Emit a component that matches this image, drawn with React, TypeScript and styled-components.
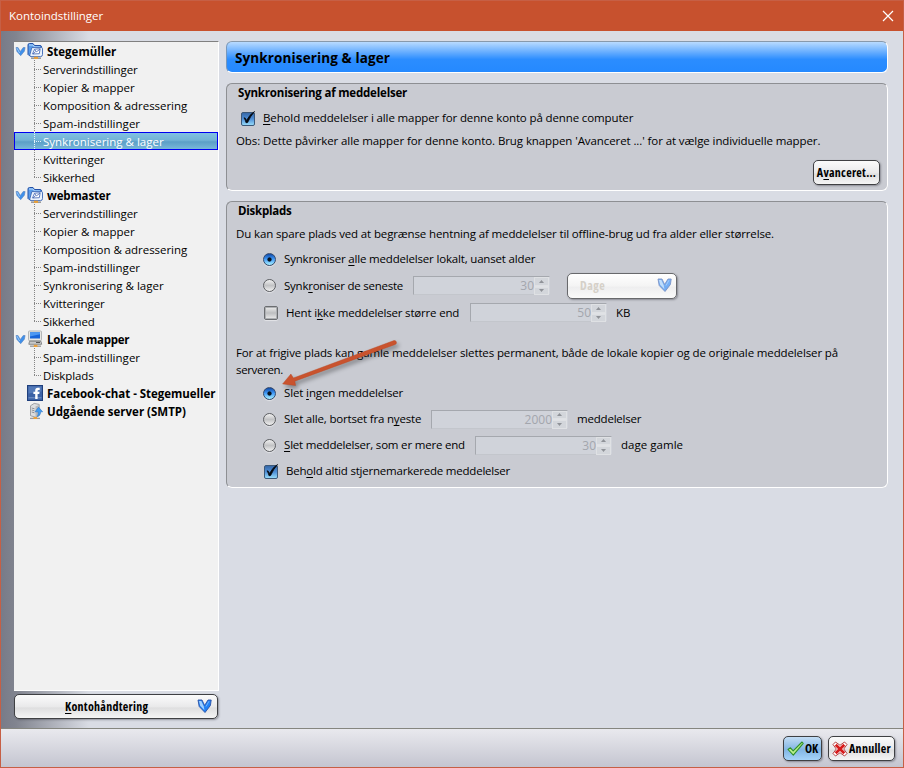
import React from 'react';
import styled, { createGlobalStyle, css } from 'styled-components';

const Global = createGlobalStyle`
  * { box-sizing: border-box; }
  body { margin: 0; }
`;

const Window = styled.div`
  position: relative;
  display: flex;
  flex-direction: column;
  width: 904px;
  height: 768px;
  border: 1px solid #c65f45;
  font: 11.5px/18px 'Open Sans', 'Noto Sans', sans-serif;
  color: #000;
  overflow: hidden;
  white-space: nowrap;
`;
const TitleBar = styled.header`
  flex: none;
  display: flex;
  align-items: center;
  justify-content: space-between;
  height: 30px;
  padding: 0 9px 0 8px;
  background: #c7512e;
  color: #fff;
`;
const Body = styled.main`
  flex: none;
  display: flex;
  gap: 7px;
  height: 697px;
  padding: 10px 0 0 13px;
  background: linear-gradient(90deg, #787b88 0, #81848f 15px, #d9dce4 88px);
`;
const Footer = styled.footer`
  flex: 1;
  display: flex;
  align-items: flex-start;
  justify-content: flex-end;
  gap: 6px;
  padding: 7px 8px 0 0;
  border-top: 1px solid #85867f;
  background: linear-gradient(#e9e9ee, #c4c5d0);
`;
const Side = styled.div`
  display: flex;
  flex-direction: column;
  gap: 3px;
  width: 205px;
`;
const Tree = styled.ul`
  list-style: none;
  margin: 0;
  padding: 0;
  height: 650px;
  line-height: 20px;
  background: #f1f1f1;
  border-top: 1px solid #808080;
  border-right: 1px solid #fff;
  border-bottom: 1px solid #fff;
`;
const Text = styled.span<{ $ls?: number }>`
  letter-spacing: ${(p) => p.$ls ?? 0}px;
  u { text-underline-offset: 2px; text-decoration-thickness: 1px; text-decoration-skip-ink: none; }
`;
const AccountName = styled(Text)`
  align-self: flex-start;
`;
const AccountRow = styled.li`
  display: flex;
  align-items: center;
  height: 18px;
  padding-left: 1px;
  font-weight: 700;
`;
const Twisty = styled.span`
  flex: none;
  display: flex;
  width: 12px;
`;
const AccountIcon = styled.span`
  flex: none;
  display: flex;
  width: 20px;
`;
const PageRow = styled.li<{ $selected?: boolean }>`
  display: flex;
  height: 18px;
  padding-left: 20px;
  ${(p) =>
    p.$selected &&
    css`
      color: #fff;
      background: linear-gradient(#83c3e3, #73b3d6 45%, #5b9fc7 55%, #7dbbdc);
      box-shadow: inset 0 0 0 1px #0000f0;
    `}
`;
const Branch = styled.span<{ $last?: boolean; $light?: boolean }>`
  --dot: ${(p) => (p.$light ? '#e4f2fa' : '#858585')};
  width: 9px;
  height: 18px;
  background:
    repeating-linear-gradient(180deg, var(--dot) 0 1px, transparent 1px 2px) 0 0 / 1px ${(p) => (p.$last ? '10px' : '18px')} no-repeat,
    repeating-linear-gradient(90deg, var(--dot) 0 1px, transparent 1px 2px) 0 9px / 7px 1px no-repeat;
`;

const Button = styled.button<{ $w: number; $primary?: boolean; $muted?: boolean }>`
  flex: none;
  display: flex;
  align-items: center;
  justify-content: center;
  gap: 1px;
  width: ${(p) => p.$w}px;
  height: ${(p) => (p.$muted ? 26 : 25)}px;
  padding: 0 1px;
  font: 700 12px/18px 'Open Sans', 'Noto Sans', sans-serif;
  font-stretch: 87.5%;
  color: #000;
  border: 1.5px solid ${(p) => (p.$muted ? '#68696c' : '#3f4043')};
  border-radius: 5px;
  box-shadow: 1px 1px 2px rgba(60, 60, 70, 0.45);
  background: ${(p) =>
    p.$primary ? 'linear-gradient(#c3ddf5, #82b5e3 55%, #a6d4fa)' : 'linear-gradient(#fbfbfb, #e9e9ea 52%, #dededf 56%, #f5f5f5)'};
  ${(p) =>
    p.$muted &&
    css`
      justify-content: space-between;
      padding: 0 4px 0 12px;
      color: #d5d0c8;
      background: linear-gradient(#fff, #f4f4f4 50%, #eeeeef 55%, #fafafa);
    `}
`;
const MenuButton = styled(Button)`
  justify-content: space-between;
  padding: 0 5px 0 50px;
`;

const Content = styled.section`
  width: 662px;
`;
const Heading = styled.h1`
  display: flex;
  align-items: center;
  height: 32px;
  margin: 0 0 10px;
  padding: 2px 0 0 8px;
  font-size: 13.5px;
  border: 1px solid;
  border-color: #8899ab #fff #fff #7797bb;
  border-radius: 6px;
  background: linear-gradient(#b9dbff, #2b8dff 58%, #2589ff);
`;
const Group = styled.fieldset<{ $h: number }>`
  display: block;
  height: ${(p) => p.$h}px;
  min-width: 0;
  margin: 0 0 10px;
  padding: 0 7px 0 9px;
  border: 1px solid;
  border-color: #8d8f93 #fff #fff #8d8f93;
  border-radius: 6px;
  background: #c9cbd2;
`;
const GroupTitle = styled.h2`
  margin: 0 0 0 2px;
  height: 19px;
  font-size: 11.5px;
  line-height: 18px;
`;
const Line = styled.div<{ $h?: number; $indent?: number; $end?: boolean }>`
  display: flex;
  align-items: center;
  height: ${(p) => p.$h ?? 26}px;
  padding-left: ${(p) => p.$indent ?? 0}px;
  justify-content: ${(p) => (p.$end ? 'flex-end' : 'flex-start')};
`;
const Paragraph = styled.p<{ $top: number; $bottom: number }>`
  margin: ${(p) => p.$top}px 0 ${(p) => p.$bottom}px;
  line-height: 17px;
`;
const Label = styled.label<{ $w?: number; $ml: number }>`
  flex: none;
  margin-left: ${(p) => p.$ml}px;
  width: ${(p) => (p.$w ? p.$w + 'px' : 'auto')};
`;
const RadioDot = styled.span<{ $on?: boolean }>`
  flex: none;
  width: 13px;
  height: 13px;
  border-radius: 50%;
  border: 1px solid ${(p) => (p.$on ? '#33486a' : '#5c5e62')};
  box-shadow: 0 1px 1px rgba(255, 255, 255, 0.5);
  background: ${(p) =>
    p.$on
      ? 'radial-gradient(circle at 50% 50%, #07131f 0 1.7px, transparent 2.5px), linear-gradient(#0f4aa8 0, #3f97f5 45%, #a9f0ff 100%)'
      : 'linear-gradient(#f0f0f0, #c2c3c5 50%, #f0f0f0)'};
`;
const Field = styled.span`
  flex: none;
  display: flex;
  justify-content: flex-end;
  width: 137px;
  height: 19px;
  border: 1px solid;
  border-color: #a5a8ae transparent #c3c6cc #a5a8ae;
  background: #d0d3da;
  color: #a3a6ad;
  font-size: 12px;
  line-height: 18px;
`;
const Stepper = styled.span`
  display: flex;
  flex-direction: column;
  gap: 1px;
  width: 15px;
  height: 18px;
  background: #e0e2e6;
`;
const Step = styled.span`
  flex: 1;
  display: flex;
  align-items: center;
  justify-content: center;
  border: 1px solid #dfe1e4;
  background: #d3d6db;
`;

const Chevron = ({ faded = false }: { faded?: boolean }) => (
  <svg width="15" height="15" viewBox="0 0 15 15" opacity={faded ? 0.6 : 1}>
    <path d="M1 1h4l2.6 5.5L11 1h3.2l-.8 5.5L8 13.5 2.2 7.5z" fill="#1f80f5" stroke="#2b50a4" strokeWidth=".9" />
    <path d="M2 2h2.3l2.5 5.6.6 3.6L3.2 6.800z" fill="#9fcfff" />
    <path d="M9 7.500 12 2.200" stroke="#6fb2ff" strokeWidth="1" />
  </svg>
);
const TreeChevron = () => (
  <svg width="11" height="11" viewBox="0 0 11 11">
    <path d="M1 1.5h2l2.3 4 2.9-4h1.9l-.7 3.7-3.7 4.5L1.9 5.4z" fill="#3f90ea" stroke="#5b83bd" strokeWidth=".6" />
    <path d="M2 2.2 4.600 7" stroke="#a9d2fa" strokeWidth=".9" />
  </svg>
);
const MailAccountIcon = () => (
  <svg width="17" height="18" viewBox="0 0 17 18">
    <path d="M1 12.5V3q0-1.5 1.5-1.5H6l1.5 2h5.5q1.5 0 1.5 1.5v8.5H2z" fill="#579be9" stroke="#2450a6" />
    <path d="M2 3h4l1.5 2H13" stroke="#b8dcff" fill="none" />
    <path d="M4.8 5.6h9.7q1 0 1 1v6q0 2-2 2H4q-1.5 0-1.2-1.7z" fill="#e9f2fd" stroke="#3a66b4" strokeWidth=".9" />
    <path d="m5.5 12 2-4.7 5.7-.6-.9 5z" fill="#fff" stroke="#5273ba" strokeWidth=".9" />
    <path d="m7.5 7.5 2 2.3 3.5-2.6M6 12l2.7-2.5" stroke="#3d62b0" fill="none" strokeWidth=".8" />
    <path d="M4 16.2h10" stroke="#9b9b9b" strokeWidth="1.6" />
    <path d="M7 15.8h4" stroke="#eaa03a" strokeWidth="2.2" />
  </svg>
);
const ComputerIcon = () => (
  <svg width="17" height="18" viewBox="0 0 17 18">
    <rect x="1.5" y="1" width="13" height="9.5" rx=".8" fill="#e6e6e3" stroke="#a5a7a8" strokeWidth=".8" />
    <rect x="3" y="2.3" width="10" height="6.2" fill="#1764d8" />
    <path d="M3 2.3h10v2L3 6.6z" fill="#4c98f3" />
    <path d="M2.5 11.3h11.5l.7 3H1.8z" fill="#c8c9c9" stroke="#75777a" strokeWidth=".8" />
    <path d="M9 12.5h4" stroke="#555" />
    <path d="M3 16.2h11" stroke="#9b9b9b" strokeWidth="1.4" />
    <path d="M6.8 15.9h3.6" stroke="#eaa03a" strokeWidth="2.2" />
  </svg>
);
const FacebookIcon = () => (
  <svg width="16" height="16" viewBox="0 0 16 16">
    <rect x=".5" y=".5" width="15" height="15" fill="#3c62a5" stroke="#1f3f7c" />
    <path d="M1.5 1.5h13v5l-13 2z" fill="#5379b8" />
    <path d="M1.5 12.8h13" stroke="#7a99cb" />
    <path d="M8.2 14V9H6.4V6.8h1.8V5.4q0-2.7 2.7-2.7h1.8V5h-1.2q-.9 0-.9.9v.9h2L12.3 9h-1.7v5z" fill="#fff" />
  </svg>
);
const ServerIcon = () => (
  <svg width="17" height="18" viewBox="0 0 17 18">
    <path d="m3.5 3.8 3.7-2.4 5 1v11.2l-3.9 1.6-4.8-1.5z" fill="#dddedf" stroke="#8c8f94" strokeWidth=".8" />
    <path d="M8.5 4.6v10.2l3.5-1.3V3z" fill="#b5b8bd" />
    <path d="m4.7 6 2.8.8M4.7 8l2.8.8M4.7 10l2.8.8" stroke="#84878c" strokeWidth=".9" />
    <path d="M3 16.4h10" stroke="#9b9b9b" strokeWidth="1.3" />
    <path d="M6.5 16h3.6" stroke="#eaa03a" strokeWidth="2" />
    <path d="m11.6 5.2 4 4.6h-2.1c.2 2.3-.7 4-3.3 4.7 1-1.5 1.2-2.8 1-4.7H8.1z" fill="#3f9cf3" stroke="#2a73c8" strokeWidth=".6" />
  </svg>
);
const CheckedBox = () => (
  <svg width="16" height="17" viewBox="0 0 16 17">
    <defs>
      <linearGradient id="boxFill" x2="0" y2="1">
        <stop stopColor="#3565a4" />
        <stop offset=".5" stopColor="#4e8fd8" />
        <stop offset="1" stopColor="#9be0fb" />
      </linearGradient>
    </defs>
    <rect x="1.5" y="2.5" width="13" height="13" rx="1.5" fill="url(#boxFill)" stroke="#3c5878" />
    <path d="M4 7.8q1.5-.3 2.6 2.7Q9.5 4.5 14.500 1.500 10.500 6 7.600 12.500L6 12.700Q5.400 9.700 4 7.800z" fill="#050a12" stroke="#050a12" strokeWidth=".8" />
  </svg>
);
const EmptyBox = styled.span`
  flex: none;
  width: 14px;
  height: 14px;
  margin: 0 1px;
  border: 1px solid #6b6d70;
  border-radius: 2px;
  box-shadow: inset 0 0 0 1px #aeb0b3, 0 1px 1px rgba(255, 255, 255, 0.5);
  background: linear-gradient(#ededed, #bdbec0 50%, #ececec);
`;
const OkIcon = () => (
  <svg width="17" height="17" viewBox="0 0 17 17">
    <path d="m1 9.5 2.4-1.7 2.8 3L15 2l1.2 1.3L6.3 15.2z" fill="#b9f08b" stroke="#2d8f2a" strokeWidth="1.1" strokeLinejoin="round" />
  </svg>
);
const CancelIcon = () => (
  <svg width="16" height="16" viewBox="0 0 16 16">
    <path d="M3.5 1 8 4.300 12.500 1 15 3.500 11.700 8 15 12.500 12.500 15 8 11.700 3.500 15 1 12.500 4.300 8 1 3.500z" fill="#fff" stroke="#a31515" strokeWidth=".8" />
    <path d="m3.700 3.700 8.600 8.600M12.300 3.700l-8.600 8.600" stroke="#d61b1b" strokeWidth="2.800" />
  </svg>
);
const CloseIcon = () => (
  <svg width="12" height="12" viewBox="0 0 12 12">
    <path d="m1 1 10 10M11 1 1 11" stroke="#fff" strokeWidth="1.2" />
  </svg>
);
const ArrowOverlay = styled.svg`
  position: absolute;
  left: 275px;
  top: 334px;
  pointer-events: none;
  filter: drop-shadow(2px 3px 2px rgba(0, 0, 0, 0.35));
`;

const Spin = ({ value }: { value: string }) => (
  <Field>
    <Text>{value}</Text>
    <Stepper>
      <Step>
        <svg width="5" height="3" viewBox="0 0 5 3"><path d="M0 3 2.5 0 5 3z" fill="#8f9298" /></svg>
      </Step>
      <Step>
        <svg width="5" height="3" viewBox="0 0 5 3"><path d="M0 0h5L2.5 3z" fill="#8f9298" /></svg>
      </Step>
    </Stepper>
  </Field>
);

type Page = [string, number];
const mailPages: Page[] = [
  ['Serverindstillinger', -0.13],
  ['Kopier & mapper', 0],
  ['Komposition & adressering', -0.04],
  ['Spam-indstillinger', 0.02],
  ['Synkronisering & lager', 0],
  ['Kvitteringer', -0.06],
  ['Sikkerhed', -0.15],
];
const localPages: Page[] = [
  ['Spam-indstillinger', 0.02],
  ['Diskplads', -0.12],
];
const accounts: { name: string; ls: number; icon: React.ReactNode; pages: Page[]; selected?: number }[] = [
  { name: 'Stegemüller', ls: 0, icon: <MailAccountIcon />, pages: mailPages, selected: 4 },
  { name: 'webmaster', ls: -0.15, icon: <MailAccountIcon />, pages: mailPages },
  { name: 'Lokale mapper', ls: -0.28, icon: <ComputerIcon />, pages: localPages },
  { name: 'Facebook-chat - Stegemueller', ls: -0.04, icon: <FacebookIcon />, pages: [] },
  { name: 'Udgående server (SMTP)', ls: 0, icon: <ServerIcon />, pages: [] },
];

export default function App() {
  return (
    <>
      <Global />
      <Window>
        <TitleBar>
          <Text $ls={-0.03}>Kontoindstillinger</Text>
          <CloseIcon />
        </TitleBar>
        <Body>
          <Side>
            <Tree>
              {accounts.map((a) => (
                <React.Fragment key={a.name}>
                  <AccountRow>
                    <Twisty>{a.pages.length > 0 && <TreeChevron />}</Twisty>
                    <AccountIcon>{a.icon}</AccountIcon>
                    <AccountName $ls={a.ls}>{a.name}</AccountName>
                  </AccountRow>
                  {a.pages.map(([label, ls], i) => (
                    <PageRow key={label} $selected={a.selected === i}>
                      <Branch $last={i === a.pages.length - 1} $light={a.selected === i} />
                      <Text $ls={ls}>{label}</Text>
                    </PageRow>
                  ))}
                </React.Fragment>
              ))}
            </Tree>
            <MenuButton $w={204}>
              <Text $ls={0.27}><u>K</u>ontohåndtering</Text>
              <Chevron />
            </MenuButton>
          </Side>
          <Content>
            <Heading><Text $ls={0.12}>Synkronisering &amp; lager</Text></Heading>
            <Group $h={108}>
              <GroupTitle><Text $ls={-0.19}>Synkronisering af meddelelser</Text></GroupTitle>
              <Line $h={30} $indent={4}>
                <CheckedBox />
                <Label $ml={7}><Text $ls={-0.125}><u>B</u>ehold meddelelser i alle mapper for denne konto på denne computer</Text></Label>
              </Line>
              <Line $h={16}>
                <Text $ls={-0.09}>Obs: Dette påvirker alle mapper for denne konto. Brug knappen 'Avanceret ...' for at vælge individuelle mapper.</Text>
              </Line>
              <Line $h={47} $end>
                <Button $w={67}><Text $ls={0.27}>A<u>v</u>anceret...</Text></Button>
              </Line>
            </Group>
            <Group $h={287}>
              <GroupTitle><Text $ls={-0.23}>Diskplads</Text></GroupTitle>
              <Paragraph $top={4} $bottom={4}>
                <Text $ls={-0.135}>Du kan spare plads ved at begrænse hentning af meddelelser til offline-brug ud fra alder eller størrelse.</Text>
              </Paragraph>
              <Line $indent={27}>
                <RadioDot $on />
                <Label $ml={8}><Text $ls={-0.175}>Synkroniser <u>a</u>lle meddelelser lokalt, uanset alder</Text></Label>
              </Line>
              <Line $h={27} $indent={27}>
                <RadioDot />
                <Label $ml={8} $w={129}><Text $ls={-0.24}>Synk<u>r</u>oniser de seneste</Text></Label>
                <Spin value="30" />
                <Label $ml={17}>
                  <Button $w={110} $muted disabled>
                    <Text $ls={0.5}>Dage</Text>
                    <Chevron faded />
                  </Button>
                </Label>
              </Line>
              <Line $h={27} $indent={27}>
                <EmptyBox />
                <Label $ml={7} $w={184}><Text $ls={-0.18}>Hent i<u>k</u>ke meddelelser større end</Text></Label>
                <Spin value="50" />
                <Label $ml={9}><Text>KB</Text></Label>
              </Line>
              <Paragraph $top={18} $bottom={2}>
                <Text $ls={-0.124}>For at frigive plads kan gamle meddelelser slettes permanent, både de lokale kopier og de originale meddelelser på</Text>
                <br />
                <Text $ls={-0.35}>serveren.</Text>
              </Paragraph>
              <Line $indent={27}>
                <RadioDot $on />
                <Label $ml={8}><Text $ls={-0.13}>Slet <u>i</u>ngen meddelelser</Text></Label>
              </Line>
              <Line $indent={27}>
                <RadioDot />
                <Label $ml={8} $w={147}><Text $ls={-0.18}>Slet alle, bortset fra n<u>y</u>este</Text></Label>
                <Spin value="2000" />
                <Label $ml={9}><Text $ls={-0.2}>meddelelser</Text></Label>
              </Line>
              <Line $indent={27}>
                <RadioDot />
                <Label $ml={8} $w={191}><Text $ls={-0.19}><u>S</u>let meddelelser, som er mere end</Text></Label>
                <Spin value="30" />
                <Label $ml={9}><Text $ls={0.03}>dage gamle</Text></Label>
              </Line>
              <Line $indent={27}>
                <CheckedBox />
                <Label $ml={7}><Text $ls={-0.21}>Beh<u>o</u>ld altid stjernemarkerede meddelelser</Text></Label>
              </Line>
            </Group>
          </Content>
        </Body>
        <Footer>
          <Button $w={39} $primary><OkIcon /><Text>OK</Text></Button>
          <Button $w={67}><CancelIcon /><Text $ls={0.27}>Annuller</Text></Button>
        </Footer>
        <ArrowOverlay width="130" height="62" viewBox="276 335 130 62">
          <path d="M394 340.5a2.1 2.1 0 0 1 1.200 4L294.800 381.200l.8 4.300-13-1.600 8.300-9.900 2.500 4z" fill="#c9532e" stroke="#b5431f" strokeWidth=".4" />
        </ArrowOverlay>
      </Window>
    </>
  );
}
